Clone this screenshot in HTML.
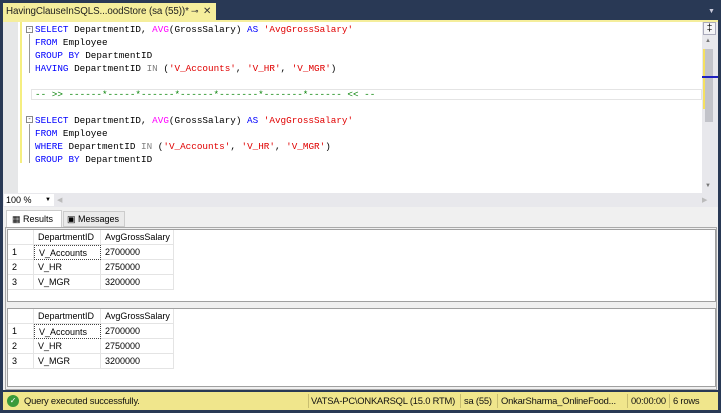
<!DOCTYPE html>
<html><head><style>
*{margin:0;padding:0;box-sizing:border-box}
body{width:721px;height:413px;background:#293955;position:relative;overflow:hidden;font-family:"Liberation Sans",sans-serif;font-size:9px}
.abs{position:absolute;white-space:nowrap}
.code{font-family:"Liberation Mono",monospace;font-size:9.3px;white-space:pre;color:#000;line-height:13px}
.k{color:#0000ff}.s{color:#e00000}.g{color:#808080}.f{color:#ff00ff}.c{color:#008000}
.grid{position:absolute;background:#fff;border:1px solid #a0a0a0}
.cell{position:absolute;height:15px;line-height:15px;padding-left:4px;border-right:1px solid #e4e4e4;border-bottom:1px solid #e4e4e4;font-size:9px;color:#000}
.sep{position:absolute;top:2px;width:1px;height:14px;background:#c8be70}
</style></head><body>
<!-- tab -->
<div class="abs" style="left:3px;top:3px;width:213px;height:17px;background:#f5ee9c;"></div>
<div class="abs" style="left:6px;top:3px;font-size:9.8px;line-height:17px;color:#1e1e1e;letter-spacing:-0.1px">HavingClauseInSQLS...oodStore (sa (55))*</div>
<div class="abs" style="left:191px;top:3px;font-size:9px;line-height:17px;color:#333">⊸</div>
<div class="abs" style="left:203px;top:3px;font-size:10px;line-height:17px;color:#333">✕</div>
<div class="abs" style="left:708px;top:8px;color:#ccd;font-size:7px">▼</div>
<div class="abs" style="left:3px;top:20px;width:715px;height:2px;background:#f5ee9c"></div>
<!-- editor -->
<div class="abs" style="left:3px;top:22px;width:715px;height:171px;background:#fff"></div>
<div class="abs" style="left:3px;top:22px;width:15px;height:171px;background:#e6e7e8"></div>
<div class="abs" style="left:20px;top:22px;width:2px;height:141px;background:#f5ee80"></div>
<div class="abs" style="left:31px;top:89px;width:671px;height:11px;border:1px solid #e4e4e4"></div>
<div class="abs" style="left:26px;top:26px;width:7px;height:7px;border:1px solid #888;font-size:7px;line-height:5px;text-align:center;color:#444">-</div>
<div class="abs" style="left:26px;top:116px;width:7px;height:7px;border:1px solid #888;font-size:7px;line-height:5px;text-align:center;color:#444">-</div>
<div class="abs" style="left:29px;top:34px;width:1px;height:39px;background:#999"></div>
<div class="abs" style="left:29px;top:124px;width:1px;height:39px;background:#999"></div>
<div class="abs code" style="left:35px;top:23px"><span class="k">SELECT</span> DepartmentID, <span class="f">AVG</span>(GrossSalary) <span class="k">AS</span> <span class="s">'AvgGrossSalary'</span>
<span class="k">FROM</span> Employee
<span class="k">GROUP BY</span> DepartmentID
<span class="k">HAVING</span> DepartmentID <span class="g">IN</span> (<span class="s">'V_Accounts'</span>, <span class="s">'V_HR'</span>, <span class="s">'V_MGR'</span>)

<span class="c">-- &gt;&gt; ------*-----*------*------*-------*-------*------ &lt;&lt; --</span>

<span class="k">SELECT</span> DepartmentID, <span class="f">AVG</span>(GrossSalary) <span class="k">AS</span> <span class="s">'AvgGrossSalary'</span>
<span class="k">FROM</span> Employee
<span class="k">WHERE</span> DepartmentID <span class="g">IN</span> (<span class="s">'V_Accounts'</span>, <span class="s">'V_HR'</span>, <span class="s">'V_MGR'</span>)
<span class="k">GROUP BY</span> DepartmentID</div>
<!-- scrollbar -->
<div class="abs" style="left:702px;top:22px;width:16px;height:171px;background:#e8e8ec"></div>
<div class="abs" style="left:703px;top:22px;width:13px;height:13px;border:1px solid #aab;background:#f4f4f6;text-align:center;font-size:10px;line-height:11px">‡</div>
<div class="abs" style="left:705px;top:38px;color:#777;font-size:6px">▲</div>
<div class="abs" style="left:705px;top:49px;width:8px;height:73px;background:#c2c3c9"></div>
<div class="abs" style="left:703px;top:49px;width:2px;height:60px;background:#f5e060"></div>
<div class="abs" style="left:702px;top:76px;width:16px;height:2px;background:#2020c0"></div>
<div class="abs" style="left:705px;top:183px;color:#777;font-size:6px">▼</div>
<!-- zoom bar -->
<div class="abs" style="left:3px;top:193px;width:715px;height:14px;background:#e8e8ec"></div>
<div class="abs" style="left:4px;top:194px;width:50px;height:12px;background:#fff;font-size:9px;line-height:12px;padding-left:2px">100 %</div>
<div class="abs" style="left:45px;top:196px;font-size:6px;line-height:8px">▼</div>
<div class="abs" style="left:57px;top:196px;color:#bbb;font-size:7px">◀</div>
<div class="abs" style="left:702px;top:196px;color:#bbb;font-size:7px">▶</div>
<!-- results tabs -->
<div class="abs" style="left:3px;top:207px;width:715px;height:183px;background:#f0f0f0"></div>
<div class="abs" style="left:6px;top:210px;width:56px;height:18px;background:#fff;border:1px solid #ccc;border-bottom:none;font-size:9px;line-height:17px;padding-left:5px">▦ Results</div>
<div class="abs" style="left:63px;top:211px;width:62px;height:16px;background:#eaeaea;border:1px solid #ccc;font-size:9px;line-height:15px;padding-left:3px">▣ Messages</div>
<div class="abs" style="left:5px;top:227px;width:712px;height:163px;background:#f0f0f0;border:1px solid #aaa"></div>
<div class="grid" style="left:7px;top:229px;width:709px;height:73px">
 <div class="cell" style="left:0;top:0;width:26px"></div><div class="cell" style="left:26px;top:0;width:67px">DepartmentID</div><div class="cell" style="left:93px;top:0;width:73px">AvgGrossSalary</div>
 <div class="cell" style="left:0;top:15px;width:26px">1</div><div class="cell" style="left:26px;top:15px;width:67px;border:1px dotted #444">V_Accounts</div><div class="cell" style="left:93px;top:15px;width:73px">2700000</div>
 <div class="cell" style="left:0;top:30px;width:26px">2</div><div class="cell" style="left:26px;top:30px;width:67px">V_HR</div><div class="cell" style="left:93px;top:30px;width:73px">2750000</div>
 <div class="cell" style="left:0;top:45px;width:26px">3</div><div class="cell" style="left:26px;top:45px;width:67px">V_MGR</div><div class="cell" style="left:93px;top:45px;width:73px">3200000</div>
</div>
<div class="grid" style="left:7px;top:308px;width:709px;height:79px">
 <div class="cell" style="left:0;top:0;width:26px"></div><div class="cell" style="left:26px;top:0;width:67px">DepartmentID</div><div class="cell" style="left:93px;top:0;width:73px">AvgGrossSalary</div>
 <div class="cell" style="left:0;top:15px;width:26px">1</div><div class="cell" style="left:26px;top:15px;width:67px;border:1px dotted #444">V_Accounts</div><div class="cell" style="left:93px;top:15px;width:73px">2700000</div>
 <div class="cell" style="left:0;top:30px;width:26px">2</div><div class="cell" style="left:26px;top:30px;width:67px">V_HR</div><div class="cell" style="left:93px;top:30px;width:73px">2750000</div>
 <div class="cell" style="left:0;top:45px;width:26px">3</div><div class="cell" style="left:26px;top:45px;width:67px">V_MGR</div><div class="cell" style="left:93px;top:45px;width:73px">3200000</div>
</div>
<!-- status bar -->
<div class="abs" style="left:3px;top:392px;width:715px;height:18px;background:#f0e68c;font-size:9.4px;line-height:18px;color:#111;letter-spacing:-0.2px">
 <span class="abs" style="left:4px;top:3px;width:12px;height:12px;border-radius:50%;background:#3a9a3a;color:#fff;font-size:8px;line-height:12px;text-align:center">✓</span>
 <span class="abs" style="left:21px">Query executed successfully.</span>
 <span class="sep" style="left:305px"></span><span class="abs" style="left:308px">VATSA-PC\ONKARSQL (15.0 RTM)</span>
 <span class="sep" style="left:457px"></span><span class="abs" style="left:461px">sa (55)</span>
 <span class="sep" style="left:494px"></span><span class="abs" style="left:498px">OnkarSharma_OnlineFood...</span>
 <span class="sep" style="left:624px"></span><span class="abs" style="left:628px">00:00:00</span>
 <span class="sep" style="left:666px"></span><span class="abs" style="left:670px">6 rows</span>
</div>
</body></html>
